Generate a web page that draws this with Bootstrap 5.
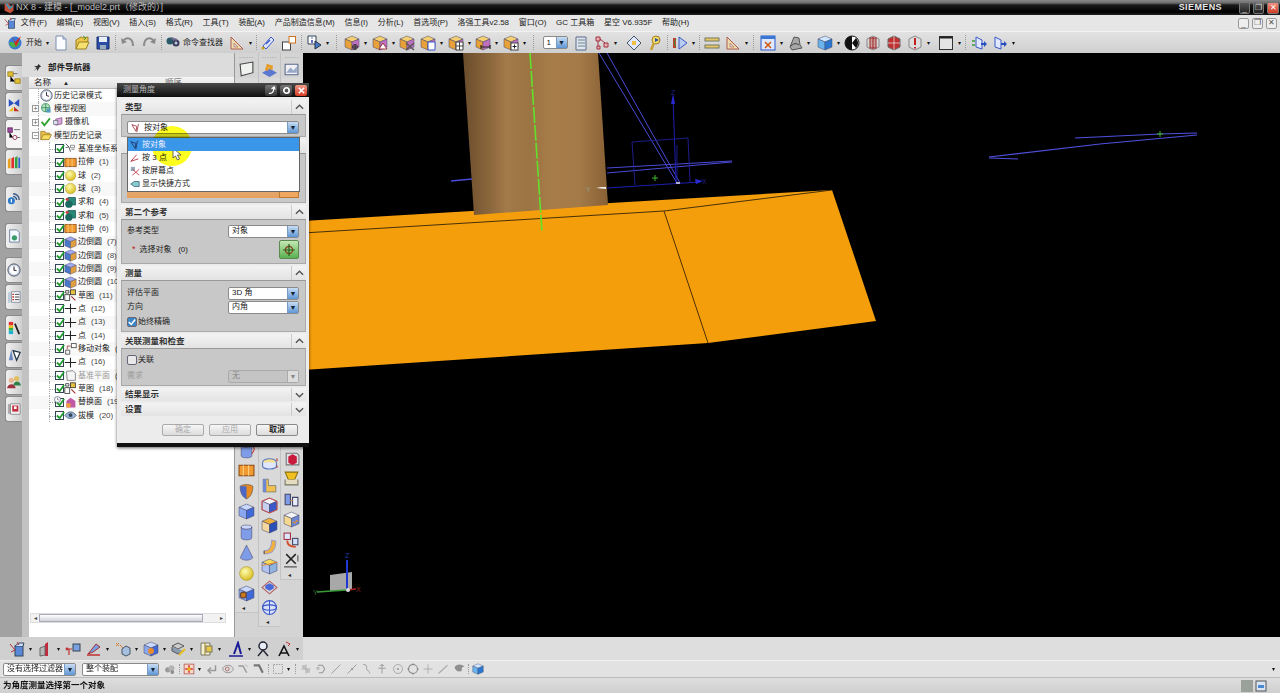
<!DOCTYPE html>
<html lang="zh-CN">

<head>
    <meta charset="UTF-8">
    <title>NX 8 - 建模</title>
    <link href="https://cdn.jsdelivr.net/npm/bootstrap@5.3.0/dist/css/bootstrap.min.css" rel="stylesheet">
    <style>
        html, body { height: 100%; overflow: hidden; background: #000; }
        body, .btn, .list-group-item { font-family: "Liberation Sans", "Noto Sans CJK SC", sans-serif; font-size: 8px; line-height: 1; color: #222; }
        .app { width: 1280px; height: 693px; filter: blur(.4px); }
        .svg-defs { width: 0; height: 0; position: absolute; }

        /* title, menu, toolbars */
        .titlebar { height: 15px; background: linear-gradient(#8a8a8a 0, #6a6a6a 3px, #1a1a1a 5px, #000 12px, #222 15px); color: #bdbdbd; font-size: 9px; padding-left: 3px; }
        .siemens { color: #e8e8e8; font-weight: 700; font-size: 9px; letter-spacing: .4px; margin-right: 17px; }
        .win-btn { width: 11px; height: 12px; border: 1px solid #777; border-radius: 2px; background: linear-gradient(#555, #222); color: #ddd; font-size: 8px; margin-right: 3px; }
        .win-close { background: linear-gradient(#f09080, #d03a20); color: #fff; width: 12px; margin-right: 1px; }
        .menubar { height: 16px; background: #e6e6e6; padding-left: 4px; gap: 9.7px; white-space: nowrap; font-size: 8px; }
        .menu-ico { width: 12px; height: 12px; margin-right: -5px; }
        .child-btn { width: 11px; height: 11px; border: 1px solid #999; border-radius: 2px; background: #eee; color: #555; font-size: 8px; margin-right: 3px; }
        .tools { height: 22px; background: linear-gradient(#e2e2e2, #cfcfcf); border-top: 1px solid #f2f2f2; }
        .tools-low { height: 23px; background: linear-gradient(90deg, #d0d0d0 303px, #dedede 303px); padding-left: 6.5px; }
        .selbar { height: 17px; background: #e2e2e2; border-top: 1px solid #f0f0f0; padding-left: 3px; }
        .statusbar { height: 16px; background: linear-gradient(#dedede, #cfcfcf); border-top: 1px solid #bbb; padding-left: 3px; font-size: 8.5px; font-weight: 700; color: #111; }
        .tb { width: 21px; flex: none; }
        .tb svg { width: 16px; height: 16px; }
        .selbar .tb { width: 15.3px; }
        .selbar .tb svg { width: 12px; height: 12px; }
        .tarr { width: 6.5px; flex: none; text-align: center; font-size: 6px; color: #111; }
        .tarr::before { content: "\25BE"; }
        .tsep { flex: none; position: relative; height: 100%; }
        .tsep-line::after { content: ""; position: absolute; left: 50%; top: 3px; bottom: 3px; border-left: 1px dotted #999; }
        .start-ico { width: 16px; height: 16px; margin-left: 7px; }
        .start-txt { width: 18px; margin-left: 3px; }
        .find-txt { width: 40px; white-space: nowrap; }
        .status-ico { width: 12px; height: 12px; margin-right: 2px; }
        .status-tray { margin-right: 11px; }
        .sel-end { margin-right: 3px; }

        /* dropdowns */
        .combo { height: 13px; background: #fff; border: 1px solid #8a8a8a; border-radius: 2px; padding-left: 3px; font-size: 8px; }
        .combo-arrow { width: 11px; height: 100%; background: linear-gradient(#c8dcf4, #5f97d6); color: #123; font-size: 7px; border-left: 1px solid #7a9cc4; }
        .combo-arrow::before { content: "\25BC"; }
        .combo-off { background: #c4c4c4; color: #888; border-color: #aaa; }
        .combo-off .combo-arrow { background: #ddd; border-color: #aaa; color: #888; }
        .combo-num { width: 25px; flex: none; margin: 0 3px 0 4px; }
        .combo-filter { width: 73px; flex: none; white-space: nowrap; }
        .combo-scope { width: 77px; flex: none; margin-left: 6px; }

        /* left strip */
        .strip { width: 22px; background: #a2a2a2; padding: 12px 0 0 5px; }
        .side-tab { height: 26px; background: linear-gradient(90deg, #f0f0f0, #cfcfcf); border: 1px solid #8a8a8a; border-right: 0; border-radius: 3px 0 0 3px; margin-bottom: 1px; }
        .side-tab svg { width: 14px; height: 14px; }
        .side-tab-on { height: 30px; background: #f4f4f4; margin-bottom: 0; }
        .side-tab-gap { margin-top: 10px; }
        .side-tab-gap7 { margin-top: 7px; }
        .side-tab-gap4 { margin-top: 4px; }

        /* navigator */
        .nav-pane { width: 212px; background: #c2c2c2; padding-left: 7px; }
        .nav-title { height: 24px; margin-left: -7px; padding: 5px 0 0 11px; gap: 6px; background: #dcdcdc; font-size: 8.5px; font-weight: 700; }
        .nav-list { background: #fff; position: relative; }
        .nav-head { height: 12px; background: linear-gradient(#f6f6f6, #dedede); border-bottom: 1px solid #bbb; padding-left: 5px; font-size: 8.5px; }
        .nav-head span:nth-child(2) { margin-left: 12px; font-size: 6px; }
        .nav-head span:nth-child(3) { margin-left: 96px; color: #666; }
        #treeRows { width: 88px; overflow: hidden; }
        .tree-row { height: 13.33px; position: relative; white-space: nowrap; }
        .tree-row:nth-child(even) { background: #f8f8f8; }
        .tree-root { padding-left: 3px; }
        .tree-root::before { content: ""; position: absolute; left: 9px; top: 0; bottom: 0; border-left: 1px dotted #aaa; }
        .tree-kid { padding-left: 26px; }
        .tree-kid::before { content: ""; position: absolute; left: 20px; top: 0; bottom: 0; border-left: 1px dotted #aaa; }
        .tree-kid::after { content: ""; position: absolute; left: 20px; width: 6px; top: 50%; border-top: 1px dotted #aaa; }
        .tree-exp { width: 7px; height: 7px; background: #fff; border: 1px solid #999; color: #555; font-size: 7px; margin-right: 1px; position: relative; z-index: 1; }
        .tree-box { width: 9px; height: 9px; background: #fff; border: 1px solid #345; position: relative; z-index: 1; flex: none; }
        .tree-box svg { width: 9px; height: 9px; display: block; margin: -1px 0 0 0; overflow: visible; }
        .tree-ico { width: 13px; height: 13px; flex: none; }
        .tree-two .tree-ico { width: 11px; height: 11px; margin-left: 1px; }
        .tree-badge { position: absolute; left: 25px; top: 0; width: 7px; height: 7px; z-index: 2; }
        .tree-txt { margin-left: 1px; letter-spacing: 0; }
        .tree-num { margin-left: 5px; color: #444; }
        .tree-grey { color: #9a9a9a; }
        .hscroll { height: 10px; margin: 0 8px 14px 1px; background: #f2f2f2; border: 1px solid #ddd; }
        .hscroll-thumb { height: 100%; background: linear-gradient(#fff, #cfd3d8); border: 1px solid #aab; margin: 0 14px 0 0; flex-grow: 1; }
        .hscroll-end { font-size: 6px; color: #444; width: 8px; }

        /* palette */
        .palette { width: 69px; background: #d4d4d4; border-left: 1px solid #999; }
        .pal-col { width: 22.6px; }
        .pal-col + .pal-col { border-left: 1px solid #c2c2c2; }
        .pal-head { height: 7px; text-align: center; color: #888; font-size: 7px; line-height: 5px; letter-spacing: .5px; }
        .pal-top { height: 18px; }
        .pal-stack { background: #d9d9d9; border-bottom: 1px solid #c4c4c4; flex-grow: 1; }
        .pal-item { width: 100%; height: 20.5px; }
        .pal-item svg, .pal-top svg { width: 17px; height: 17px; }
        .pal-foot { height: 8px; font-size: 6px; padding-left: 7px; color: #222; }
        .pal-a { margin-bottom: 24px; }
        .pal-b { margin-bottom: 10px; }
        .pal-c { margin-bottom: 57px; }

        /* canvas */
        .model-view { flex: 1 1 0; background: #000; display: block; min-width: 0; }

        /* measure dialog lies over the window */
        .measure-dlg { position: absolute; left: 117px; top: 30px; width: 192px; height: 360px; background: #ececec; box-shadow: 0 4px 0 #111, 0 5px 3px rgba(0,0,0,.6); }
        .dlg-title { height: 14px; background: linear-gradient(#4a4a4a, #0c0c0c); color: #b8b8b8; padding-left: 6px; font-size: 8px; }
        .dlg-btn { width: 12px; height: 11px; background: linear-gradient(#777, #333); border-radius: 2px; margin-right: 3px; }
        .dlg-btn svg { width: 9px; height: 9px; }
        .dlg-close { background: linear-gradient(#f39a88, #d63a22); margin-right: 2px; }
        .dlg-body { padding: 3px 3px 0 4px; gap: 2px; }
        .sec-head { height: 14px; background: linear-gradient(#f3f3f3, #e3e3e3); padding-left: 4px; font-weight: 700; font-size: 8.5px; color: #333; }
        .sec-head-low { height: 13px; }
        .sec-chev { width: 15px; height: 100%; border-left: 1px solid #ccc; margin-left: auto; }
        .sec-chev svg { width: 9px; height: 6px; }
        .sec-body { background: #c8c8c8; border: 1px solid #a9a9a9; border-top-color: #999; padding: 0 6px 0 5px; }
        .sb-type { height: 23px; padding-top: 6px; }
        .sb-first { height: 50px; justify-content: flex-end; padding-bottom: 4px; }
        .sb-second { height: 45px; }
        .sb-measure { height: 52px; padding-top: 1px; }
        .sb-assoc { height: 38px; padding-top: 2px; }
        .form-line { height: 14px; }
        .form-line .combo { width: 71px; margin-left: auto; }
        .select-glyph { width: 10px; height: 10px; margin-right: 3px; }
        .orange-bar { height: 14px; background: linear-gradient(#d9b189, #e8a05c); }
        .orange-btn { width: 20px; margin-left: auto; height: 100%; background: #f0a860; border: 1px solid #c07a30; }
        .pick-line { margin-top: 2px; }
        .pick-btn { width: 20px; height: 19px; margin-left: auto; background: linear-gradient(#c4e8b4, #58b050); border: 1px solid #5a8a50; border-radius: 2px; }
        .pick-btn svg { width: 14px; height: 14px; }
        .req-star { color: #c01818; font-size: 9px; margin: 0 4px 0 5px; }
        .check-line { margin-top: 3px; }
        .check-mark { width: 10px; height: 10px; border: 1px solid #667; border-radius: 2px; background: #e8e8e8; margin-right: 1px; }
        .check-on { background: #3c87c8; }
        .check-on svg { width: 8px; height: 8px; }
        .dlg-foot { height: 24px; padding: 8px 11px 0 0; gap: 5px; justify-content: flex-end; }
        .dlg-foot .btn { width: 42px; height: 12px; padding: 0; border: 1px solid #888; border-radius: 2px; background: linear-gradient(#f6f6f6, #dcdcdc); font-size: 8px; font-weight: 700; color: #222; }
        .dlg-foot .btn.disabled { color: #aaa; border-color: #aaa; opacity: 1; font-weight: 400; }
        .type-menu { position: absolute; left: 10px; top: 54px; width: 173px; height: 55px; border: 1px solid #666; border-radius: 0; background: #fff; }
        .type-menu .list-group-item { height: 13.4px; padding: 0 0 0 2px; border: 0; border-radius: 0; background: #fff; display: flex; align-items: center; gap: 2px; font-size: 8px; color: #222; }
        .type-menu .list-group-item.active { background: #3a96e8; color: #eef; }
        .type-menu svg { width: 10px; height: 10px; flex: none; }
        .spot { position: absolute; left: 35px; top: 43px; width: 40px; height: 40px; border-radius: 50%; background: #fdfd20; mix-blend-mode: multiply; }
        .pointer { position: absolute; left: 55px; top: 64px; width: 10px; height: 14px; }
    </style>
</head>

<body>
    <svg class="svg-defs">
        <defs>
            <linearGradient id="cylFill" x1="0" x2="1" y1="0" y2="0">
                <stop offset="0" stop-color="#6b4d2c" />
                <stop offset=".18" stop-color="#8a663c" />
                <stop offset=".3" stop-color="#a37a49" />
                <stop offset=".45" stop-color="#9a7442" />
                <stop offset=".62" stop-color="#a87c48" />
                <stop offset=".8" stop-color="#a47a48" />
                <stop offset="1" stop-color="#876035" />
            </linearGradient>
            <radialGradient id="ballFill" cx=".4" cy=".35" r=".7">
                <stop offset="0" stop-color="#fdfdb0" />
                <stop offset="1" stop-color="#d8b818" />
            </radialGradient>
        </defs>
    </svg>

    <div class="app d-flex flex-column">
        <div class="titlebar d-flex align-items-center">
            <svg width="13" height="13" viewBox="0 0 16 16"><path d="M2 3h5l3 4 3-4v9l-4 3-7-3z" fill="#c0503a"/><path d="M4 3l4 6 4-3" fill="none" stroke="#49b" stroke-width="2"/></svg>
            <span>NX 8 - 建模 - [_model2.prt（修改的）]</span>
            <span class="siemens ms-auto">SIEMENS</span>
            <span class="win-btn d-flex align-items-end justify-content-center">_</span>
            <span class="win-btn d-flex align-items-center justify-content-center">❐</span>
            <span class="win-btn win-close d-flex align-items-center justify-content-center">✕</span>
        </div>

        <div class="menubar d-flex align-items-center" id="menuBar"></div>
        <div class="tools d-flex align-items-center" id="topTools"></div>

        <div class="flex-grow-1 d-flex position-relative overflow-hidden">
            <div class="strip d-flex flex-column" id="sideTabs"></div>

            <div class="nav-pane d-flex flex-column">
                <div class="nav-title d-flex align-items-center">
                    <svg width="9" height="9" viewBox="0 0 10 10"><path d="M6 1 9 4 7 5 5 9 4 6 1 9 4 5 1 4 5 3z" fill="#333"/></svg>
                    <span>部件导航器</span>
                </div>
                <div class="nav-list d-flex flex-column flex-grow-1">
                    <div class="nav-head d-flex align-items-center"><span>名称</span><span>▲</span><span>顺序</span></div>
                    <div id="treeRows"></div>
                    <div class="flex-grow-1"></div>
                    <div class="hscroll d-flex align-items-center">
                        <span class="hscroll-end text-center">◂</span>
                        <div class="hscroll-thumb"></div>
                        <span class="hscroll-end text-center">▸</span>
                    </div>
                </div>
            </div>

            <div class="palette d-flex" id="palette"></div>

            <svg class="model-view" viewBox="303 53 977 584" preserveAspectRatio="none">
                <polygon points="303,221 832,190 876,321 708,343 303,370" fill="#f59e0c" />
                <polyline points="303,233 664,211 832,190" fill="none" stroke="#1a1408" stroke-width=".8" />
                <line x1="664" y1="211" x2="708" y2="343" stroke="#3a2604" stroke-width=".9" />
                <polygon points="463,53 598,53 608,205 474,215" fill="url(#cylFill)" />
                <line x1="530" y1="53" x2="542" y2="232" stroke="#62e02c" stroke-width="1.6" stroke-dasharray="16 2" />

                <g fill="none" stroke="#4a4ad8">
                    <line x1="599" y1="53" x2="677" y2="183" />
                    <line x1="607" y1="53" x2="680" y2="183" />
                    <line x1="607" y1="168" x2="732" y2="161" />
                    <line x1="607" y1="173" x2="732" y2="162" />
                    <line x1="451" y1="181" x2="472" y2="179" stroke-width="1.6" />
                </g>
                <g fill="none" stroke="#20209a" stroke-width=".9">
                    <polyline points="635,185 632,142 688,138 690,182" />
                    <line x1="677" y1="145" x2="677" y2="184" />
                </g>
                <line x1="673" y1="97" x2="676" y2="183" stroke="#1e1eb0" />
                <polygon points="673,94 671,104 675,104" fill="#2a2ad0" />
                <line x1="607" y1="188" x2="700" y2="182" stroke="#1e1eb0" />
                <polygon points="703,181 695,179 696,184" fill="#2a2ad0" />
                <line x1="676" y1="183" x2="680" y2="183" stroke="#dde" stroke-width="1.5" />
                <text x="671" y="95" font-size="7" fill="#222288" font-family="Liberation Sans, sans-serif">Z</text>
                <text x="702" y="184" font-size="7" fill="#222288" font-family="Liberation Sans, sans-serif">X</text>
                <text x="586" y="192" font-size="7" fill="#998" font-family="Liberation Sans, sans-serif">Y</text>
                <polygon points="596,188 601,187 606,187 606,189" fill="#eee" />
                <path d="M655 175v6M652 178h6" stroke="#3fb72c" />

                <g fill="none" stroke="#5050e0" stroke-width="1.2">
                    <path d="M1075 138 1160 134 1197 133" />
                    <path d="M989 157 1100 144 1197 135" />
                    <path d="M989 158 1018 159" />
                </g>
                <path d="M1160 131v6M1157 134h6" stroke="#3fb72c" />

                <polygon points="330,575 352,572 352,590 330,591" fill="#a8a8a8" />
                <line x1="317" y1="592" x2="347" y2="590" stroke="#3a9a3a" stroke-width="1.4" />
                <line x1="347" y1="590" x2="356" y2="589" stroke="#b02020" stroke-width="1.4" />
                <line x1="347" y1="590" x2="347" y2="560" stroke="#2038d0" stroke-width="2" />
                <circle cx="348" cy="590" r="2" fill="#ddd" />
                <text x="313" y="595" font-size="7" fill="#3a7a3a" font-family="Liberation Sans, sans-serif">Y</text>
                <text x="345" y="558" font-size="7" fill="#2038a0" font-family="Liberation Sans, sans-serif">Z</text>
                <text x="356" y="592" font-size="7" fill="#902020" font-family="Liberation Sans, sans-serif">X</text>
            </svg>

            <!-- floating dialog -->
            <div class="measure-dlg d-flex flex-column">
                <div class="dlg-title d-flex align-items-center">
                    <span>测量角度</span>
                    <span class="dlg-btn d-flex align-items-center justify-content-center ms-auto"><svg viewBox="0 0 10 10"><path d="M2 8c4 1 6-2 5-6L5 3l3-2 1 3" fill="none" stroke="#fff" stroke-width="1.3"/></svg></span>
                    <span class="dlg-btn d-flex align-items-center justify-content-center"><svg viewBox="0 0 10 10"><circle cx="5" cy="5" r="3" fill="none" stroke="#fff" stroke-width="1.8"/></svg></span>
                    <span class="dlg-btn dlg-close d-flex align-items-center justify-content-center"><svg viewBox="0 0 10 10"><path d="M2 2l6 6M8 2 2 8" stroke="#fff" stroke-width="1.7"/></svg></span>
                </div>
                <div class="dlg-body d-flex flex-column">
                    <div>
                        <div class="sec-head d-flex align-items-center">类型<span class="sec-chev d-flex align-items-center justify-content-center"><svg viewBox="0 0 10 6"><path d="M1 5 5 1l4 4" fill="none" stroke="#555" stroke-width="1.6"/></svg></span></div>
                        <div class="sec-body sb-type">
                            <div class="combo d-flex align-items-center">
                                <svg class="select-glyph" viewBox="0 0 12 12"><path d="M1 2l5 8 1-6zM9 1 7 11" fill="none" stroke="#a03040"/></svg>
                                <span>按对象</span>
                                <span class="combo-arrow d-flex align-items-center justify-content-center ms-auto"></span>
                            </div>
                        </div>
                    </div>
                    <div>
                        <div class="sec-head d-flex align-items-center"><span class="sec-chev"></span></div>
                        <div class="sec-body sb-first d-flex flex-column">
                            <div class="orange-bar d-flex"><span class="orange-btn"></span></div>
                        </div>
                    </div>
                    <div>
                        <div class="sec-head d-flex align-items-center">第二个参考<span class="sec-chev d-flex align-items-center justify-content-center"><svg viewBox="0 0 10 6"><path d="M1 5 5 1l4 4" fill="none" stroke="#555" stroke-width="1.6"/></svg></span></div>
                        <div class="sec-body sb-second">
                            <div class="form-line d-flex align-items-center mt-1">参考类型
                                <div class="combo d-flex align-items-center">对象<span class="combo-arrow d-flex align-items-center justify-content-center ms-auto"></span></div>
                            </div>
                            <div class="pick-line d-flex align-items-center">
                                <span class="req-star">*</span>选择对象&nbsp;&nbsp;&nbsp;(0)
                                <span class="pick-btn d-flex align-items-center justify-content-center"><svg viewBox="0 0 14 14"><circle cx="7" cy="7" r="3.6" fill="none" stroke="#8a3a1a" stroke-width="1.2"/><path d="M7 1v12M1 7h12" stroke="#2a5a1a" stroke-width="1.2"/></svg></span>
                            </div>
                        </div>
                    </div>
                    <div>
                        <div class="sec-head d-flex align-items-center">测量<span class="sec-chev d-flex align-items-center justify-content-center"><svg viewBox="0 0 10 6"><path d="M1 5 5 1l4 4" fill="none" stroke="#555" stroke-width="1.6"/></svg></span></div>
                        <div class="sec-body sb-measure">
                            <div class="form-line d-flex align-items-center mt-1">评估平面
                                <div class="combo d-flex align-items-center">3D 角<span class="combo-arrow d-flex align-items-center justify-content-center ms-auto"></span></div>
                            </div>
                            <div class="form-line d-flex align-items-center">方向
                                <div class="combo d-flex align-items-center">内角<span class="combo-arrow d-flex align-items-center justify-content-center ms-auto"></span></div>
                            </div>
                            <div class="check-line d-flex align-items-center"><span class="check-mark check-on d-flex align-items-center justify-content-center"><svg viewBox="0 0 10 10"><path d="M1 5l3 3 5-6" fill="none" stroke="#fff" stroke-width="2"/></svg></span>始终精确</div>
                        </div>
                    </div>
                    <div>
                        <div class="sec-head d-flex align-items-center">关联测量和检查<span class="sec-chev d-flex align-items-center justify-content-center"><svg viewBox="0 0 10 6"><path d="M1 5 5 1l4 4" fill="none" stroke="#555" stroke-width="1.6"/></svg></span></div>
                        <div class="sec-body sb-assoc">
                            <div class="d-flex align-items-center mt-1"><span class="check-mark"></span>关联</div>
                            <div class="form-line d-flex align-items-center mt-1 tree-grey">需求
                                <div class="combo combo-off d-flex align-items-center">无<span class="combo-arrow d-flex align-items-center justify-content-center ms-auto"></span></div>
                            </div>
                        </div>
                    </div>
                    <div class="sec-head sec-head-low d-flex align-items-center">结果显示<span class="sec-chev d-flex align-items-center justify-content-center"><svg viewBox="0 0 10 6"><path d="M1 1l4 4 4-4" fill="none" stroke="#555" stroke-width="1.6"/></svg></span></div>
                    <div class="sec-head sec-head-low d-flex align-items-center">设置<span class="sec-chev d-flex align-items-center justify-content-center"><svg viewBox="0 0 10 6"><path d="M1 1l4 4 4-4" fill="none" stroke="#555" stroke-width="1.6"/></svg></span></div>
                </div>
                <div class="dlg-foot d-flex">
                    <button class="btn disabled">确定</button>
                    <button class="btn disabled">应用</button>
                    <button class="btn">取消</button>
                </div>

                <div class="type-menu list-group">
                    <div class="list-group-item active"><svg viewBox="0 0 12 12"><path d="M1 2l5 8 1-6zM9 1 7 11" fill="none" stroke="#203060"/></svg>按对象</div>
                    <div class="list-group-item"><svg viewBox="0 0 12 12"><path d="M1 10l9-3M1 10l7-8" fill="none" stroke="#b02030"/></svg>按 3 点</div>
                    <div class="list-group-item"><svg viewBox="0 0 12 12"><rect x="1" y="1" width="5" height="5" fill="#9ab"/><path d="M3 11 11 4M3 4l8 7" stroke="#c03040"/></svg>按屏幕点</div>
                    <div class="list-group-item"><svg viewBox="0 0 12 12"><path d="M1 6l4-3h6v6H5z" fill="#8cc" stroke="#468"/></svg>显示快捷方式</div>
                </div>
                <div class="spot"></div>
                <svg class="pointer" viewBox="0 0 10 14"><path d="M1 1v10l2.5-2 2 4 2-1-2-4H9z" fill="#fff" stroke="#444" stroke-width=".8"/></svg>
            </div>
        </div>

        <div class="tools-low d-flex align-items-center" id="lowTools"></div>
        <div class="selbar d-flex align-items-center" id="selBar"></div>
        <div class="statusbar d-flex align-items-center">
            <span>为角度测量选择第一个对象</span>
            <span class="status-tray ms-auto d-flex align-items-center">
                <svg class="status-ico" viewBox="0 0 12 12"><rect width="12" height="12" fill="#9aa09a"/></svg>
                <svg class="status-ico" viewBox="0 0 12 12"><rect x="1" y="1" width="10" height="10" fill="#d8e4f4" stroke="#555"/><rect x="3" y="5" width="6" height="3" fill="#4a88d0"/></svg>
            </span>
        </div>
    </div>

    <script>
        document.addEventListener("DOMContentLoaded", function () {

            // box with three faces, extra goes on top
            function box(top, front, side, extra) {
                return `<path d="M8 1 15 4 8 7 1 4z" fill="${top}" stroke="#446" stroke-width=".5"/>` +
                    `<path d="M1 4 8 7v8L1 12z" fill="${front}" stroke="#446" stroke-width=".5"/>` +
                    `<path d="M15 4 8 7v8l7-3z" fill="${side}" stroke="#446" stroke-width=".5"/>` + (extra || "");
            }
            const pinkBox = (extra) => box("#f4d070", "#e8a038", "#c070c0", extra);
            const blueBox = (extra) => box("#c8d8ff", "#8aa8f0", "#3f68d8", extra);
            const cyl = '<ellipse cx="8" cy="3" rx="5" ry="2" fill="#cdd8ff" stroke="#446" stroke-width=".5"/><path d="M3 3v10c0 2.6 10 2.6 10 0V3c0 2.6-10 2.6-10 0z" fill="#7f9ce8" stroke="#446" stroke-width=".5"/>';
            const book = '<path d="M1 3h14v10H1z" fill="#f09a30" stroke="#8a4a10"/><path d="M5 3v10M10 3v10" stroke="#fbd08a"/>';

            const icons = {
                nx: '<circle cx="8" cy="8" r="6.5" fill="#3a78d8"/><path d="M2 8c3-3 6 2 11-1-1 6-9 8-11 1z" fill="#46b04a"/><path d="M5 1l3 6 6-6-5 11z" fill="#d02a20"/>',
                doc: '<path d="M3 1h7l3 3v11H3z" fill="#fbfcff" stroke="#7a8fb0"/><path d="M10 1v3h3" fill="#cdd8ea" stroke="#7a8fb0"/>',
                folder: '<path d="M2 14V5l5-3 2 1 5-1v4z" fill="#eec84a" stroke="#9a8020"/><path d="M2 14 5 7h10l-3 7z" fill="#f6e070" stroke="#9a8020"/><path d="M9 1l3 2-2 2" fill="none" stroke="#4a9a2a"/>',
                save: '<path d="M2 2h12v12H2z" fill="#2a4ea8" stroke="#1a2a68"/><path d="M4 2h8v5H4z" fill="#e8eef8"/><path d="M5 10h6v4H5z" fill="#9ab"/>',
                undo: '<path d="M3 6c4-5 10-3 10 5" fill="none" stroke="#8a8a8a" stroke-width="2"/><path d="M1 3l1 6 5-2z" fill="#8a8a8a"/>',
                redo: '<path d="M13 6C9 1 3 3 3 11" fill="none" stroke="#8a8a8a" stroke-width="2"/><path d="M15 3l-1 6-5-2z" fill="#8a8a8a"/>',
                binoc: '<circle cx="5" cy="6" r="3.5" fill="#2a5a6a"/><circle cx="11" cy="8" r="3.5" fill="#3a3a5a"/><path d="M6 3l6 2" stroke="#6a6a8a" stroke-width="2"/><circle cx="11" cy="8" r="1.5" fill="#bcd"/>',
                ruler: '<path d="M2 2v12h12z" fill="#efdcae" stroke="#b05a50"/><path d="M5 8v4h4z" fill="#d8d8d8" stroke="#b05a50" stroke-width=".6"/>',
                wand: '<path d="M3 11 11 2l3 3-8 9z" fill="#dfe8ff" stroke="#3a58c8"/><path d="M6 9l4-4" stroke="#3a58c8" stroke-width="1.5"/><circle cx="3" cy="13" r="1.5" fill="#c8a010"/>',
                panes: '<rect x="1.5" y="7" width="8" height="8" fill="#fff" stroke="#444"/><rect x="8" y="1.5" width="6.5" height="6.5" fill="#fff" stroke="#d07020"/>',
                info: '<path d="M2 1h8v8H2z" fill="#fff" stroke="#345"/><path d="M6 2.5v1M6 5v3" stroke="#23a" stroke-width="1.4"/><path d="M9 6l6 4-6 4z" fill="#4a78c8" stroke="#234"/>',
                c1: pinkBox('<path d="M11 9v6M8 12h6" stroke="#333" stroke-width="1.2"/><circle cx="11" cy="12" r="2.4" fill="none" stroke="#333"/>'),
                c2: pinkBox('<path d="M7 14l4-6 4 6z" fill="#fff" stroke="#a03040"/>'),
                c3: pinkBox('<path d="M7 8l8 7M15 8l-8 7" stroke="#555" stroke-width="1.4"/>'),
                c4: pinkBox('<path d="M8 7h7v8H8z" fill="#fff" stroke="#3a58c8"/>'),
                c5: pinkBox('<path d="M8 7h7v8H8zM8 11h7M11.5 7v8" fill="#fff" stroke="#444"/>'),
                c6: pinkBox('<path d="M6 12h9M6 10v4M15 10v4" stroke="#222" stroke-width="1.2"/>'),
                c7: pinkBox('<rect x="8" y="8" width="7" height="7" fill="#fff" stroke="#444"/><path d="M9.5 11.5h4M11.5 9.5v4" stroke="#222"/>'),
                sheets: '<path d="M3 2h10v13H3z" fill="#dfe4ee" stroke="#5a6a8a"/><path d="M5 5h7M5 8h7M5 11h7" stroke="#6a8a8a"/>',
                net: '<path d="M2 2h4v4H2zM10 8h4v4h-4zM3 11h3v3H3z" fill="#e8b0b0" stroke="#a03040"/><path d="M4 6v5M6 4l5 4" stroke="#a03040"/>',
                diamond: '<path d="M8 1l7 7-7 7-7-7z" fill="#dfe8ff" stroke="#456"/><path d="M6 6h4v4H6z" fill="#f0c040"/>',
                key: '<circle cx="9" cy="5" r="4" fill="#f6dc70" stroke="#a08020"/><path d="M7 8 4 15" stroke="#c8a030" stroke-width="2.4"/><path d="M8 3l4 2-4 2z" fill="#2a50a0"/>',
                play: '<path d="M1 3h3v10H1z" fill="#c03a30"/><path d="M4 4 2 8l2 4" stroke="#3a9a3a" fill="none"/><path d="M7 2l8 6-8 6z" fill="#b8ccf0" stroke="#3a58c8"/>',
                bars: '<rect x="1" y="3" width="14" height="3" fill="#e6c860" stroke="#776"/><rect x="1" y="10" width="14" height="3" fill="#e6c860" stroke="#776"/>',
                xbox: '<rect x="1" y="1" width="14" height="14" fill="#dfe8ff" stroke="#2a58c8"/><rect x="1" y="1" width="14" height="3" fill="#3a78d8"/><path d="M5 7l6 6M11 7l-6 6" stroke="#d05a10" stroke-width="1.6"/>',
                gray: '<path d="M3 12 7 2l5 1 1 7 2 3-10 2z" fill="#a8a8a8" stroke="#555"/><path d="M4 11c3-3 5-3 8-1" stroke="#444" fill="none"/>',
                blue: box("#cfe8ff", "#6ab4ee", "#2a78d0"),
                halfb: '<circle cx="8" cy="8" r="7" fill="#fff" stroke="#111"/><path d="M8 1a7 7 0 0 0 0 14z" fill="#111"/><path d="M12 3a7 7 0 0 1 0 10L8 8z" fill="#111"/>',
                redc: '<path d="M2 4 8 1l6 3v8l-6 3-6-3z" fill="none" stroke="#888"/><rect x="5" y="3" width="6" height="10" fill="#c8a0a0" stroke="#a02020"/><path d="M8 2v12" stroke="#a02020"/>',
                redb: '<path d="M2 4 8 1l6 3v8l-6 3-6-3z" fill="#c03030" stroke="#666"/><path d="M2 8l12 0M8 1v14" stroke="#eee" stroke-width=".7"/>',
                redl: '<path d="M2 4 8 1l6 3v8l-6 3-6-3z" fill="#ddd" stroke="#888"/><path d="M8 3v7M8 12v1.5" stroke="#c02020" stroke-width="2"/>',
                frame: '<rect x="1.5" y="1.5" width="13" height="13" fill="#e4e4e4" stroke="#333"/><rect x="1.5" y="1.5" width="13" height="2" fill="#222"/>',
                impin: '<path d="M5 2l6 3v9l-6-2z" fill="#dfe8ff" stroke="#3a58c8"/><path d="M1 6h3M1 10h3" stroke="#3a9a3a" stroke-width="1.4"/><path d="M10 8h3V6l3 3-3 3v-2h-3z" fill="#2a50c0"/>',
                expout: '<path d="M3 2l6 3v9l-6-2z" fill="#dfe8ff" stroke="#3a58c8"/><path d="M9 8h3V6l3 3-3 3v-2H9z" fill="#2a50c0"/>',

                // side tabs
                asm: '<rect x="1" y="1" width="6" height="5" fill="#e0c030" stroke="#9a8020"/><rect x="9" y="9" width="6" height="5" fill="#e0c030" stroke="#9a8020"/><path d="M4 6v6h5M7 3h5" stroke="#666"/>',
                bowtie: '<path d="M2 1l6 5 6-5v9l-6-4-6 4z" fill="#2a50c0"/><path d="M2 15l5-5v5z" fill="#e0c020"/><path d="M8 10l6 5H8z" fill="#c03020"/>',
                tree: '<rect x="1" y="1" width="5" height="5" fill="#a050a0" stroke="#602060"/><path d="M3 6v6h4M8 3h7M11 12h4" stroke="#666"/><circle cx="9" cy="12" r="2.4" fill="none" stroke="#a03050"/>',
                books: '<path d="M1 5l3-2v12H1z" fill="#e8a020"/><path d="M5 4l3-2v13H5z" fill="#e03030"/><path d="M9 3l3-2v14H9z" fill="#30a040"/><path d="M13 3h2v12h-2z" fill="#3060d0"/>',
                wifi: '<circle cx="5" cy="10" r="4" fill="#2a78c8"/><path d="M7 2c4 0 7 3 7 7M7 5c2 0 4 2 4 4" fill="none" stroke="#3a5a88" stroke-width="1.6"/><path d="M5 8v4" stroke="#fff" stroke-width="1.4"/>',
                page: '<path d="M3 1h8l3 3v11H3z" fill="#f4f8ff" stroke="#6a7a9a"/><circle cx="8.5" cy="10" r="3" fill="#3a9a6a"/>',
                clock: '<circle cx="8" cy="8" r="7" fill="#c8d4e8" stroke="#445"/><circle cx="8" cy="8" r="5" fill="#fff"/><path d="M8 4v4l3 1" fill="none" stroke="#223" stroke-width="1.2"/>',
                list: '<path d="M1 3l3-1v12l-3 1z" fill="#bcd"/><path d="M5 2h10v12H5z" fill="#fff" stroke="#789"/><path d="M6 5h2M6 8h2M6 11h2" stroke="#c03030" stroke-width="1.5"/><path d="M9 5h5M9 8h5M9 11h5" stroke="#333"/>',
                color: '<path d="M2 1h5v4H2z" fill="#e03030"/><path d="M2 5h5v3H2z" fill="#e8c020"/><path d="M2 8h5v3H2z" fill="#30b040"/><path d="M2 11h5v4H2z" fill="#20b0d0"/><path d="M9 3l5 12" stroke="#222" stroke-width="2"/>',
                bowb: '<path d="M2 14 5 2l2 12z" fill="#6a88c0"/><path d="M7 3l8 2-4 9z" fill="#fff" stroke="#234" stroke-width="1.4"/>',
                people: '<circle cx="5" cy="6" r="3" fill="#e8b890"/><path d="M0 15c1-6 9-6 10 0z" fill="#a03040"/><circle cx="11" cy="4" r="3" fill="#e0c060"/><path d="M7 12c1-6 8-6 9 0z" fill="#30804a"/>',
                photo: '<path d="M1 2l3 1v11l-3-1z" fill="#aaa"/><path d="M4 2h11v12H4z" fill="#f4f4f4" stroke="#888"/><rect x="6" y="4" width="7" height="7" fill="#c03040"/><rect x="8" y="5" width="3" height="3" fill="#fff"/>',

                // tree
                modelv: '<circle cx="7" cy="7" r="5" fill="#bfe0c0" stroke="#2a8a5a"/><path d="M2 7h10M7 2v10" stroke="#2a8a5a"/><rect x="8" y="8" width="5" height="5" fill="#59b" />',
                cam: '<path d="M4 3l9-2v9l-9 2z" fill="#d8a8d8" stroke="#804080"/><rect x="1" y="5" width="6" height="6" fill="#e0e0f0" stroke="#667"/>',
                vcheck: '<path d="M1 7l4 5 8-10" fill="none" stroke="#2aa02a" stroke-width="2.6"/>',
                openf: '<path d="M1 13V3h5l1 2h5v2" fill="#e8c050" stroke="#a08020"/><path d="M1 13l3-6h10l-3 6z" fill="#f6dc60" stroke="#a08020"/>',
                csys: '<path d="M2 2l4 4M2 7l4-1M6 6l2 6" stroke="#444" fill="none"/><path d="M8 4h5v3H8zM9 9h4" fill="none" stroke="#777"/>',
                extr: book,
                ball: '<circle cx="8" cy="8" r="6.5" fill="url(#ballFill)" stroke="#a09020" stroke-width=".5"/>',
                unite: '<rect x="5" y="2" width="9" height="9" fill="#2a8a7a" stroke="#1a5a5a"/><circle cx="6" cy="10" r="4.5" fill="#1a6a60"/><circle cx="4" cy="4" r="2" fill="#c04040"/>',
                blend: box("#a0a8f0", "#4a78c8", "#e0a040"),
                sketch: '<rect x="1" y="7" width="6" height="7" fill="#fff" stroke="#333"/><rect x="8" y="1" width="6" height="6" fill="#eac040" stroke="#333"/><path d="M2 2h4v3H2z" fill="none" stroke="#333"/><path d="M9 9l5 5" stroke="#a03030" stroke-width="1.4"/>',
                plus: '<path d="M8 2v12M1 8h14" stroke="#222" stroke-width="1.3"/>',
                move: '<path d="M2 10h5v5H2z" fill="none" stroke="#444"/><rect x="9" y="2" width="6" height="5" fill="#fff" stroke="#444"/><path d="M4 9V5h4" fill="none" stroke="#a03030"/>',
                plane: '<path d="M3 3l8-1 3 3v9H4z" fill="#f4f4f4" stroke="#777"/>',
                repl: '<path d="M3 14V6l5-4 6 4v8z" fill="#c058a8"/><path d="M3 14V9h5v5z" fill="#f0a030"/>',
                eye: '<path d="M1 8c4-6 10-6 14 0-4 5-10 5-14 0z" fill="#9ab4d8" stroke="#567"/><circle cx="8" cy="7.5" r="2.4" fill="#345"/>',

                // palette
                sheet: '<path d="M2 3l12-2v10L3 14z" fill="#f0f2f0" stroke="#444"/>',
                pile: '<path d="M1 11l7-4 7 4-7 4z" fill="#5a78d0"/><path d="M4 6h3v3H4zM8 4h3v4H8zM5 3h3v3H5z" fill="#e89a20"/>',
                picbox: '<path d="M2 3h12v10H2z" fill="#f0f0f4" stroke="#5a6a8a"/><path d="M3 11l4-5 3 3 3-4v6z" fill="#98a8c8"/>',
                cylar: cyl + '<path d="M13 3c3 2 3 5 0 8" fill="none" stroke="#c03030"/>',
                shield: '<path d="M2 3c3-2 9-2 12 0 0 6-2 10-6 12C4 13 2 9 2 3z" fill="#e88a20" stroke="#444" stroke-width=".5"/><path d="M2 3h6v12C4 13 2 9 2 3z" fill="#4a68c8"/>',
                bluebox: blueBox(),
                cylb: cyl,
                cone: '<path d="M8 1 14 13c-3 3-9 3-12 0z" fill="#7f9ce8" stroke="#446" stroke-width=".5"/>',
                bore: blueBox('<circle cx="5" cy="9.5" r="2.8" fill="#c87a20" stroke="#643"/>'),
                ring: '<ellipse cx="8" cy="6" rx="6.5" ry="3.5" fill="#f2e090" stroke="#5a78c0"/><path d="M1.5 6v4c2 3 11 3 13 0V6" fill="#dfe6ff" stroke="#5a78c0"/><path d="M15 2v3M15 9v2" stroke="#c03030"/>',
                lshape: '<path d="M2 3h5v6h7v6H2z" fill="#f0c050" stroke="#456" stroke-width=".5"/><path d="M2 3h3v12H2z" fill="#6a88d8"/>',
                outl: box("#f4f4f8", "#c8d0f0", "#3a58c8", '<path d="M1 4 8 1l7 3v8l-7 3-7-3z" fill="none" stroke="#c85050"/>'),
                otop: box("#f0b040", "#f4d8a0", "#2a50b8"),
                bend: '<path d="M3 12c5 0 7-4 7-10l4 1c0 7-2 12-11 12z" fill="#f0b040" stroke="#a0a0c0"/><path d="M3 12v3" stroke="#555"/>',
                ybox: box("#f4dc60", "#b0c4f4", "#90b4e0", '<path d="M1 7l14-3" stroke="#e88a30"/>'),
                dbox: '<path d="M8 2l7 6-7 6-7-6z" fill="none" stroke="#b06060"/>' + '<path d="M8 4l4 2v3l-4 2-4-2V6z" fill="#4a68d8"/>',
                globe: '<circle cx="8" cy="8" r="6.5" fill="#d8e0f8" stroke="#3a58c8"/><ellipse cx="8" cy="8" rx="6.5" ry="2.5" fill="none" stroke="#3a58c8"/><path d="M8 1.5v13" stroke="#3a58c8"/>',
                redcube: '<path d="M3 3h10l2 2v9H3z" fill="#dfdfe8" stroke="#777"/><path d="M5 6l4-2 4 2v6l-4 2-4-2z" fill="#c81a3a"/>',
                trap: '<path d="M2 2h12l-3 7H5z" fill="#f0c020" stroke="#8a7010"/><path d="M2 9v5h12V9" fill="#e4dcc0" stroke="#776"/>',
                twocyl: '<path d="M2 3h5v10H2z" fill="#7f9ce8" stroke="#446"/><path d="M9 6h5v8H9z" fill="#e8eeff" stroke="#446"/><path d="M7 9l2 0" stroke="#e88a30"/>',
                boxar: box("#f4f4f8", "#f4d890", "#6a88d8", '<path d="M8 10h7l-3-2v4z" fill="#e88a20"/>'),
                combo: '<rect x="1" y="1" width="6" height="6" fill="#dfe6ff" stroke="#a03040"/><rect x="9" y="6" width="5" height="6" fill="#cfe0ff" stroke="#446"/><path d="M4 8c0 5 4 6 8 6" stroke="#d05030" stroke-width="1.8" fill="none"/>',
                xaxes: '<path d="M3 2l9 9M12 2 3 11" stroke="#222" stroke-width="1.4"/><path d="M1 14h12M14 3v6" stroke="#555"/>',

                // low toolbar
                l1: '<rect x="6" y="5" width="8" height="10" fill="#5a88d8" stroke="#345"/><path d="M6 5l4-3h5l-1 3" fill="#cfe0ff" stroke="#345"/><path d="M1 3l5 6M2 11l4-2M8 1l2 3" stroke="#b03040"/>',
                l2: '<path d="M11 1v14H8V3z" fill="#c02a3a"/><path d="M3 7l5-2v9l-5 1z" fill="#b8b8b8" stroke="#666"/>',
                l3: '<path d="M1 8h6M4 8v6" stroke="#c03030" stroke-width="1.2"/><rect x="8" y="3" width="7" height="7" fill="#7aa0e0" stroke="#345"/><circle cx="2" cy="8" r="1.4" fill="#c03030"/>',
                l4: '<path d="M2 13l8-10 4 3-7 5z" fill="#7aa0e8" stroke="#a03030"/><path d="M1 14h13" stroke="#c03030" stroke-width="1.5"/>',
                l5: '<path d="M1 2l3 3M4 2 1 5" stroke="#d08030"/><path d="M5 4l3 3" stroke="#d08030"/>' + '<path d="M7 8l4-3 4 2v6l-4 2-4-2z" fill="#a8c0e0" stroke="#456"/>',
                l6: blueBox('<circle cx="8" cy="10" r="3" fill="#e88a30"/>'),
                l7: '<path d="M2 5l6-3 6 3-6 3z" fill="#ccc" stroke="#555"/><path d="M2 6v4l6 3 6-3" fill="#8a9ab0" stroke="#555"/><path d="M9 14l6-6" stroke="#e8c020" stroke-width="2"/>',
                l8: '<path d="M3 2h9v12H3z" fill="#f4f0d0" stroke="#776"/><path d="M7 2v12" stroke="#a08020"/><rect x="8" y="5" width="6" height="6" fill="#e8c840" stroke="#776"/>',
                aa: '<path d="M1 15h14" stroke="#1a1a98" stroke-width="1.5"/><path d="M6 13 10 2l3 11" fill="none" stroke="#1a1a98" stroke-width="2"/>',
                dish: '<circle cx="8" cy="5" r="4" fill="#e8eef8" stroke="#223" stroke-width="1.5"/><path d="M8 9 3 15M8 9l5 6" stroke="#223" stroke-width="1.4"/>',
                aab: '<path d="M3 15 8 5l5 10M5 12h6" fill="none" stroke="#111" stroke-width="1.6"/><path d="M10 1l4 2-2 2" fill="none" stroke="#c03030"/>',

                // selection bar, greyed
                s1: '<circle cx="5" cy="9" r="3.5" fill="#9a9a9a"/><circle cx="10" cy="7" r="4" fill="#b4b4b4"/><circle cx="11" cy="12" r="2.5" fill="#8a8a8a"/>',
                s2: '<rect x="1.5" y="1.5" width="13" height="13" fill="#f8d8c8" stroke="#b05050"/><path d="M8 3v10M3 8h10" stroke="#d03030" stroke-width="2"/><circle cx="8" cy="8" r="2.5" fill="#e8b020"/>',
                s3: '<path d="M14 3v7H5M8 6 4 10l4 4" fill="none" stroke="#999" stroke-width="2"/>',
                s4: '<ellipse cx="8" cy="8" rx="7" ry="5" fill="#ddd" stroke="#888"/><circle cx="7" cy="8" r="2.5" fill="none" stroke="#a55"/>',
                s5: '<path d="M2 4h6l5 9" fill="none" stroke="#999" stroke-width="2"/><path d="M11 2l3 3" stroke="#999"/>',
                s6: '<path d="M1 3h7l5 10" fill="none" stroke="#777" stroke-width="3"/>',
                s7: '<rect x="2" y="2" width="12" height="12" fill="none" stroke="#888" stroke-dasharray="2 1.5"/>',
                s8: '<path d="M8 2v12M2 8h12" stroke="#999"/><rect x="3" y="3" width="4" height="4" fill="#bbb"/><rect x="9" y="9" width="4" height="4" fill="#bbb"/>',
                s9: '<path d="M4 3h6l3 5-3 5H5" fill="none" stroke="#999" stroke-width="1.4"/><rect x="2" y="5" width="4" height="4" fill="#bbb"/>',
                s10: '<path d="M2 14 14 2" stroke="#999" stroke-width="1.2"/>',
                s11: '<path d="M2 14 14 2" stroke="#999" stroke-width="1.2"/><circle cx="8" cy="8" r="1.5" fill="#999"/>',
                s12: '<path d="M3 2c8 0 2 6 6 8s2 4 2 4" fill="none" stroke="#999" stroke-width="1.2"/>',
                s13: '<path d="M8 2v12M3 7h10M5 4l3-2 3 2" fill="none" stroke="#999" stroke-width="1.2"/>',
                s14: '<circle cx="8" cy="8" r="6" fill="none" stroke="#999"/><circle cx="8" cy="8" r="1.4" fill="#999"/>',
                s15: '<circle cx="8" cy="8" r="6" fill="none" stroke="#888" stroke-width="1.4"/><path d="M8 0v3M8 13v3M0 8h3M13 8h3" stroke="#888"/>',
                s16: '<path d="M8 2v12M2 8h12" stroke="#aaa" stroke-width="1.2"/>',
                s17: '<path d="M2 14 14 3" stroke="#aaa" stroke-width="1.4"/>',
                s18: '<path d="M2 6c2-5 10-5 13-1-3 0-4 2-3 5-3 2-8 2-10-4z" fill="#909090"/>'
            };

            function svg(name) {
                return `<svg viewBox="0 0 16 16">${icons[name] || ""}</svg>`;
            }

            // name = button, ">" = small arrow, number = separator width, negative = plain space
            function renderTools(target, items) {
                const el = document.getElementById(target);
                let html = "";
                items.forEach(item => {
                    if (item === ">") {
                        html += '<span class="tarr"></span>';
                    } else if (typeof item === "number") {
                        html += `<span class="tsep ${item > 0 ? "tsep-line" : ""}" style="width:${Math.abs(item)}px"></span>`;
                    } else if (item.startsWith("<")) {
                        html += item;
                    } else {
                        html += `<span class="tb d-flex align-items-center justify-content-center">${svg(item)}</span>`;
                    }
                });
                el.innerHTML = html;
            }

            const arrowCell = '<span class="combo-arrow d-flex align-items-center justify-content-center ms-auto"></span>';

            // menu
            const menuItems = ["文件(F)", "编辑(E)", "视图(V)", "插入(S)", "格式(R)", "工具(T)", "装配(A)", "产品制造信息(M)", "信息(I)", "分析(L)", "首选项(P)", "洛强工具v2.58", "窗口(O)", "GC 工具箱", "星空 V6.935F", "帮助(H)"];
            document.getElementById("menuBar").innerHTML =
                `<svg class="menu-ico" viewBox="0 0 16 16">${icons.l1}</svg>` +
                menuItems.map(m => `<span>${m}</span>`).join("") +
                '<span class="ms-auto d-flex"><span class="child-btn d-flex align-items-end justify-content-center">_</span><span class="child-btn d-flex align-items-center justify-content-center">❐</span><span class="child-btn d-flex align-items-center justify-content-center">✕</span></span>';

            // top toolbar
            const startBtn = `<svg class="start-ico" viewBox="0 0 16 16">${icons.nx}</svg><span class="start-txt">开始</span><span class="tarr"></span>`;
            renderTools("topTools", [
                startBtn, "doc", "folder", "save", 3.5, "undo", "redo", 3,
                "binoc", '<span class="find-txt">命令查找器</span>', -3, "ruler", ">", 4, "wand", "panes", 3.5, "info", ">", 11,
                "c1", ">", "c2", ">", "c3", "c4", ">", "c5", ">", "c6", ">", "c7", ">", 11,
                `<span class="combo combo-num d-flex align-items-center">1${arrowCell}</span>`,
                "sheets", "net", ">", -4, "diamond", "key", 4, "play", ">", 4.5, "bars", "ruler", ">", 7.5,
                "xbox", ">", "gray", ">", -2, "blue", ">", "halfb", "redc", "redb", "redl", ">", -3, "frame", ">", 5.5, "impin", "expout", ">"
            ]);

            // bottom toolbars
            renderTools("lowTools", ["l1", ">", "l2", ">", -1, "l3", "l4", ">", -1.5, "l5", ">", "l6", ">", "l7", ">", "l8", ">", -2.5, "aa", ">", "dish", "aab", ">"]);
            const sel1 = `<span class="combo combo-filter d-flex align-items-center">没有选择过滤器${arrowCell}</span>`;
            const sel2 = `<span class="combo combo-scope d-flex align-items-center">整个装配${arrowCell}</span>`;
            renderTools("selBar", [sel1, sel2, -3, "s1", 4, "s2", ">", "s3", -2, "s4", "s5", "s6", 4, "s7", ">", 6,
                "s8", "s9", "s10", "s11", "s12", "s13", "s14", "s15", "s16", "s17", "s18", 4, "blue",
                '<span class="ms-auto sel-end d-flex align-items-center"><span class="tarr"></span></span>']);

            // side tabs
            const tabs = [["asm", ""], ["bowtie", ""], ["tree", "side-tab-on"], ["books", ""], ["wifi", "side-tab-gap"], ["page", "side-tab-gap"], ["clock", "side-tab-gap7"], ["list", ""], ["color", "side-tab-gap4"], ["bowb", ""], ["people", ""], ["photo", ""]];
            document.getElementById("sideTabs").innerHTML = tabs.map(t =>
                `<div class="side-tab ${t[1]} d-flex align-items-center justify-content-center">${svg(t[0])}</div>`
            ).join("");

            // part navigator tree
            const roots = [
                { exp: "", ico: "clock", text: "历史记录模式" },
                { exp: "+", ico: "modelv", text: "模型视图" },
                { exp: "+", pre: "vcheck", ico: "cam", text: "摄像机" },
                { exp: "−", ico: "openf", text: "模型历史记录" }
            ];
            const kids = [
                ["csys", "基准坐标系", ""], ["extr", "拉伸", "(1)"], ["ball", "球", "(2)"], ["ball", "球", "(3)"],
                ["unite", "求和", "(4)"], ["unite", "求和", "(5)"], ["extr", "拉伸", "(6)"], ["blend", "边倒圆", "(7)"],
                ["blend", "边倒圆", "(8)"], ["blend", "边倒圆", "(9)"], ["blend", "边倒圆", "(10)"], ["sketch", "草图", "(11)"],
                ["plus", "点", "(12)"], ["plus", "点", "(13)"], ["plus", "点", "(14)"], ["move", "移动对象", "(15)"],
                ["plus", "点", "(16)"], ["plane", "基准平面", "(17)", "tree-grey"], ["sketch", "草图", "(18)"],
                ["repl", "替换面", "(19)", "", true], ["eye", "拔模", "(20)"]
            ];
            const tick = '<svg viewBox="0 0 10 10"><path d="M1 5l3 3 5-7" fill="none" stroke="#1f9a2f" stroke-width="2"/></svg>';
            let rows = roots.map(r => {
                const box = r.exp ? `<span class="tree-exp d-flex align-items-center justify-content-center">${r.exp}</span>` : '<span class="tree-exp invisible"></span>';
                const pre = r.pre ? `<svg class="tree-ico" viewBox="0 0 16 16">${icons[r.pre]}</svg>` : "";
                return `<div class="tree-row tree-root ${r.pre ? "tree-two" : ""} d-flex align-items-center">${box}${pre}<svg class="tree-ico" viewBox="0 0 16 16">${icons[r.ico]}</svg><span class="tree-txt">${r.text}</span></div>`;
            }).join("");
            rows += kids.map(k => {
                const badge = k[4] ? `<svg class="tree-badge" viewBox="0 0 16 16">${icons.clock}</svg>` : "";
                return `<div class="tree-row tree-kid d-flex align-items-center ${k[3] || ""}">${badge}<span class="tree-box">${tick}</span><svg class="tree-ico" viewBox="0 0 16 16">${icons[k[0]]}</svg><span class="tree-txt">${k[1]}</span><span class="tree-num">${k[2]}</span></div>`;
            }).join("");
            document.getElementById("treeRows").innerHTML = rows;

            // roles palette, each column hangs from its own bottom
            const columns = [
                { top: "sheet", cls: "pal-a", items: ["cylar", "extr", "shield", "bluebox", "cylb", "cone", "ball", "bore"] },
                { top: "pile", cls: "pal-b", items: ["ring", "lshape", "outl", "otop", "bend", "ybox", "dbox", "globe"] },
                { top: "picbox", cls: "pal-c", items: ["redcube", "trap", "twocyl", "boxar", "combo", "xaxes"] }
            ];
            document.getElementById("palette").innerHTML = columns.map(col => `
                <div class="pal-col d-flex flex-column ${col.cls}">
                    <div class="pal-head">......</div>
                    <div class="pal-top d-flex align-items-center justify-content-center">${svg(col.top)}</div>
                    <div class="pal-stack d-flex flex-column justify-content-end">
                        ${col.items.map(i => `<span class="pal-item d-flex align-items-center justify-content-center">${svg(i)}</span>`).join("")}
                        <span class="pal-foot d-flex align-items-center">◂</span>
                    </div>
                </div>`).join("");
        });
    </script>
    <script src="https://cdn.jsdelivr.net/npm/bootstrap@5.3.0/dist/js/bootstrap.bundle.min.js"></script>
</body>

</html>
